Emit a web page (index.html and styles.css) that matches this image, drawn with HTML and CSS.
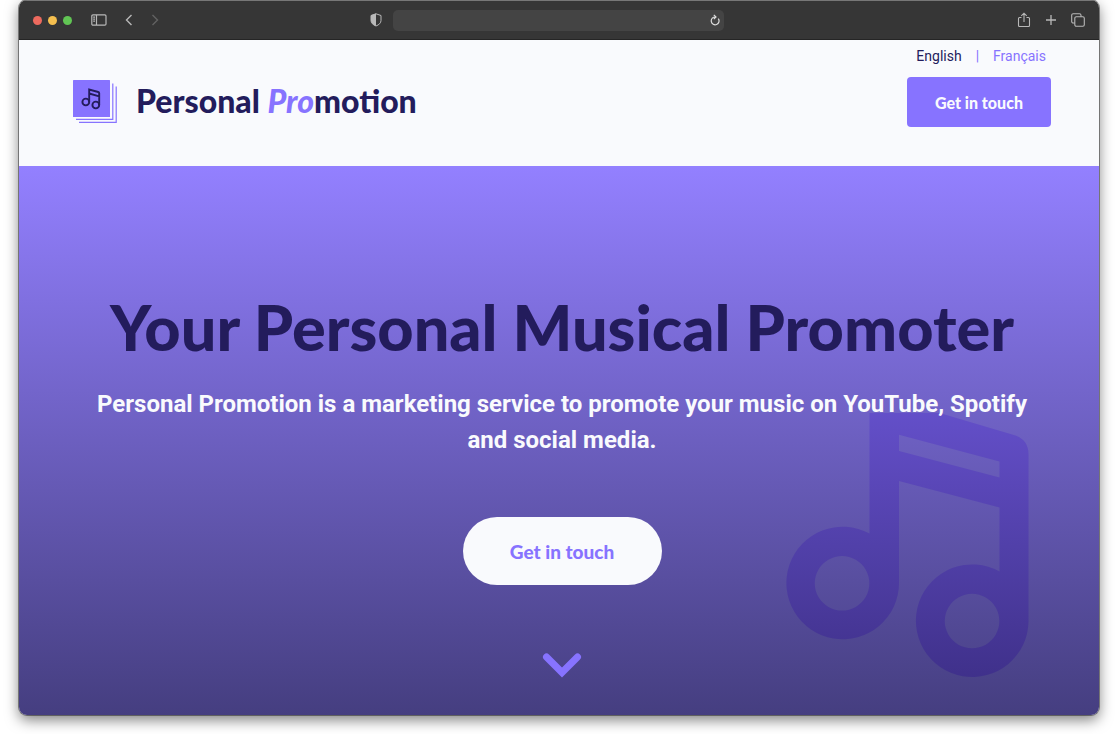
FILE: index.html
```
<!DOCTYPE html>
<html lang="en">
<head>
  <meta charset="UTF-8">
  <meta name="viewport" content="width=device-width, initial-scale=1.0">
  <title>Personal Promotion</title>
  <link rel="stylesheet" href="styles.css">
</head>
<body>
  <div class="window">
    <div class="toolbar">
      <div class="toolbar-left">
        <div class="lights">
          <span class="light red"></span>
          <span class="light yellow"></span>
          <span class="light green"></span>
        </div>
        <button class="tool sidebar" aria-label="Sidebar">
          <svg width="16" height="12" viewBox="0 0 16 12" fill="none" stroke="currentColor" stroke-width="1.2">
            <rect x="0.8" y="0.8" width="14.2" height="10.4" rx="1.2"/>
            <path d="M5.5 1v10M2.2 3.2h1.8M2.2 5.2h1.8M2.2 7.2h1.8"/>
          </svg>
        </button>
        <button class="tool back" aria-label="Back">
          <svg width="8" height="12" viewBox="0 0 8 12" fill="none" stroke="currentColor" stroke-width="1.4"><path d="M6.5 1 1.5 6l5 5"/></svg>
        </button>
        <button class="tool forward" aria-label="Forward">
          <svg width="8" height="12" viewBox="0 0 8 12" fill="none" stroke="currentColor" stroke-width="1.4"><path d="m1.5 1 5 5-5 5"/></svg>
        </button>
      </div>
      <div class="toolbar-center">
        <button class="tool" aria-label="Privacy report">
          <svg width="12" height="14" viewBox="0 0 12 14"><path d="M6 .8 11 2.500v5C11 10 9 11.800 6 13 3 11.800 1 10 1 7.500v-5z" fill="none" stroke="currentColor"/><path d="M6 .5 1 2.300v5.200C1 10 3 12 6 13z" fill="currentColor"/></svg>
        </button>
        <div class="address">
          <input type="text" aria-label="Address">
          <button class="tool reload" aria-label="Reload">
            <svg width="10" height="12" viewBox="0 0 10 12" fill="none" stroke="currentColor" stroke-width="1.2"><path d="M8.300 4.600A3.900 3.900 0 1 1 5.500 3M3.800.8 6 3 3.800 5.200"/></svg>
          </button>
        </div>
      </div>
      <div class="toolbar-right">
        <button class="tool" aria-label="Share">
          <svg width="14" height="16" viewBox="0 0 14 16" fill="none" stroke="currentColor" stroke-width="1.1"><path d="M4.500 5.500H2.500a1 1 0 0 0-1 1v7a1 1 0 0 0 1 1h9a1 1 0 0 0 1-1v-7a1 1 0 0 0-1-1h-2M7 10V1.200M4.300 3.800 7 1.200l2.700 2.600"/></svg>
        </button>
        <button class="tool" aria-label="New tab">
          <svg width="12" height="12" viewBox="0 0 12 12" fill="none" stroke="currentColor" stroke-width="1.3"><path d="M6 1v10M1 6h10"/></svg>
        </button>
        <button class="tool" aria-label="Tabs">
          <svg width="14" height="14" viewBox="0 0 14 14" fill="none" stroke="currentColor" stroke-width="1.1"><rect x="3.8" y="3.8" width="9.5" height="9.5" rx="1.5"/><path d="M3.800 10H2.200A1.500 1.500 0 0 1 .7 8.500V2.200A1.500 1.500 0 0 1 2.200.7h6.300A1.500 1.500 0 0 1 10 2.200v1.600"/></svg>
        </button>
      </div>
    </div>

    <header class="header">
      <a class="brand" href="#">
        <svg class="logo" width="45" height="44" viewBox="0 0 45 44">
          <rect width="37" height="37" rx="0.5" fill="#8773ff"/>
          <path d="M3 39.300h36.800V3.500M6 42.400h37.200V6.500" fill="none" stroke="#8773ff" stroke-width="1.2"/>
          <g fill="none" stroke="#231c5c" stroke-width="1.9">
            <circle cx="12.8" cy="22" r="3.4"/><circle cx="22.8" cy="25" r="3.4"/>
            <path d="M16.200 22V9.500l9 2.500q1 .3 1 1.300V25M16.200 13.500l10 2.800"/>
          </g>
        </svg>
        <span class="brand-name">Personal <em>Pro</em>motion</span>
      </a>
      <div class="header-side">
        <nav class="languages">
          <a class="current" href="#">English</a>
          <span>|</span>
          <a href="#">Français</a>
        </nav>
        <button class="contact">Get in touch</button>
      </div>
    </header>

    <main class="hero">
      <svg class="note" width="244" height="265" viewBox="785 413 244 265">
        <defs>
          <linearGradient id="note-fill" x1="0" y1="0" x2="0" y2="1">
            <stop offset="0" stop-color="#4a26d4"/>
            <stop offset="1" stop-color="#280a90"/>
          </linearGradient>
        </defs>
        <path fill="url(#note-fill)" fill-rule="evenodd" d="M869.500 534V408q0-15 16-11l130 38.500q13 4.500 13 19V621a56.300 56.300 0 1 1-29-49.500V507.500L899 481v102a56.300 56.300 0 1 1-29.500-49.500zM899 434.700v16.300l100.500 26.500V461.500zM842 556a27.300 27.300 0 1 0 .1 0zM972 593.700a27.300 27.300 0 1 0 .1 0z"/>
      </svg>
      <h1>Your Personal Musical Promoter</h1>
      <p>Personal Promotion is a marketing service to promote your music on YouTube, Spotify and social media.</p>
      <button class="cta">Get in touch</button>
      <a class="scroll-down" href="#" aria-label="Scroll down">
        <svg width="40" height="26" viewBox="0 0 40 26"><path d="M4.500 5 20 20.500 35.500 5" fill="none" stroke="#8773ff" stroke-width="7" stroke-linecap="round"/></svg>
      </a>
    </main>
  </div>
</body>
</html>
```
FILE: styles.css
```
* {
  box-sizing: border-box;
}

body {
  margin: 0;
  min-height: 100vh;
  padding: 0 19px 19px;
  display: flex;
  background: #ffffff;
  color: #231c5c;
  font-family: "Liberation Sans", Arial, sans-serif;
}

button,
input {
  font: inherit;
  border: none;
  padding: 0;
}

button {
  cursor: pointer;
}

a {
  color: inherit;
  text-decoration: none;
}

.window {
  flex: 1;
  display: flex;
  flex-direction: column;
  border-radius: 8px;
  overflow: hidden;
  box-shadow: 0 0 0 1px rgba(0, 0, 0, 0.4), 0 5px 14px rgba(0, 0, 0, 0.5);
}

/* browser toolbar */

.toolbar {
  height: 40px;
  display: grid;
  grid-template-columns: 1fr auto 1fr;
  align-items: center;
  padding: 0 14px;
  background: #363636;
  border-top: 1px solid #777777;
  border-bottom: 1px solid #252525;
}

.toolbar-left,
.toolbar-center,
.toolbar-right,
.lights {
  display: flex;
  align-items: center;
}

.lights {
  gap: 6px;
}

.light {
  width: 9px;
  height: 9px;
  border-radius: 50%;
}

.red {
  background: #ed6a5e;
}

.yellow {
  background: #f5bf4f;
}

.green {
  background: #61c554;
}

.tool {
  display: flex;
  background: none;
  color: #b8b8b8;
}

.sidebar {
  margin-left: 19px;
}

.back,
.forward {
  margin-left: 18px;
}

.forward {
  color: #626262;
}

.toolbar-center {
  gap: 11px;
  padding-right: 24px;
}

.address {
  display: flex;
  align-items: center;
  width: 331px;
  height: 21px;
  padding-right: 4px;
  background: #444444;
  border-radius: 5px;
}

.address input {
  flex: 1;
  min-width: 0;
  background: none;
  color: #dddddd;
  outline: none;
}

.reload {
  color: #dddddd;
}

.toolbar-right {
  justify-content: flex-end;
  gap: 14px;
}

/* header */

.header {
  display: flex;
  justify-content: space-between;
  height: 126px;
  padding: 8px 48px 0 54px;
  background: #f9fafd;
}

.brand {
  display: flex;
  align-items: center;
  gap: 18px;
  height: 108px;
}

.brand-name {
  font-family: Lato, sans-serif;
  font-size: 32px;
  line-height: 36px;
  padding-bottom: 2px;
  font-weight: 900;
}

.brand em {
  color: #8773ff;
}

.header-side {
  display: flex;
  flex-direction: column;
  align-items: flex-end;
  gap: 13px;
}

.languages {
  display: flex;
  gap: 14px;
  padding-right: 5px;
  font-family: Roboto, sans-serif;
  font-size: 14px;
  line-height: 16px;
  color: #8773ff;
}

.languages .current {
  color: #231c5c;
}

.contact {
  width: 144px;
  height: 50px;
  border-radius: 4px;
  background: #8773ff;
  color: #f9fafd;
  font-family: Lato, sans-serif;
  font-size: 16px;
  font-weight: 900;
}

/* hero */

.hero {
  position: relative;
  flex: 1;
  display: flex;
  flex-direction: column;
  align-items: center;
  padding: 119px 64px 36px 70px;
  background: linear-gradient(#9380ff, #453e80);
  text-align: center;
}

.note {
  position: absolute;
  right: 70px;
  bottom: 37px;
  opacity: 0.3;
}

.hero h1 {
  position: relative;
  margin: 0;
  font-family: Lato, sans-serif;
  font-size: 63px;
  line-height: 84px;
  font-weight: 900;
}

.hero p {
  position: relative;
  margin: 17px 0 59px;
  max-width: 946px;
  color: #f9fafd;
  font-family: Roboto, sans-serif;
  font-size: 24px;
  line-height: 36px;
  font-weight: 700;
}

.cta {
  position: relative;
  flex: none;
  width: 199px;
  height: 68px;
  border-radius: 34px;
  background: #f9fafd;
  color: #8773ff;
  font-family: Lato, sans-serif;
  font-size: 19px;
  font-weight: 900;
}

.scroll-down {
  position: relative;
  display: flex;
  margin-top: 67px;
}
```
